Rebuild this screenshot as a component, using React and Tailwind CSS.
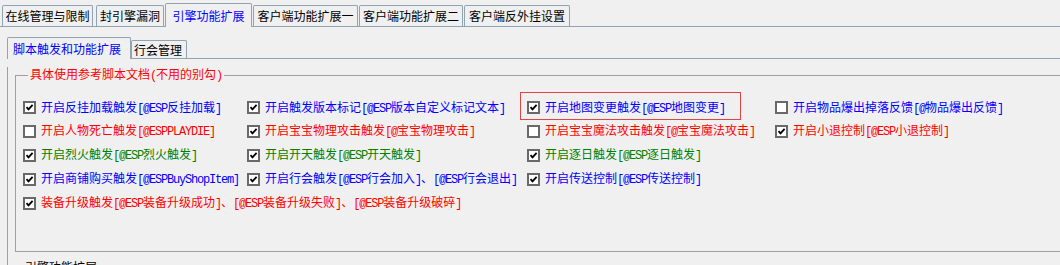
import React from "react";

const topTabs = [
  { label: "在线管理与限制", cls: "ml-[2px] w-[91px]" },
  { label: "封引擎漏洞", cls: "ml-[3px] w-[68px]" },
  { label: "引擎功能扩展", cls: "ml-[1px] w-[87px]", active: true },
  { label: "客户端功能扩展一", cls: "ml-[1px] w-[105px]" },
  { label: "客户端功能扩展二", cls: "ml-[1px] w-[104px]" },
  { label: "客户端反外挂设置", cls: "ml-[1px] w-[106px]" },
];

const BLUE = "text-[#0000ff]";
const RED = "text-[#ff0000]";
const GREEN = "text-[#008000]";

const rows = [
  {
    h: "h-[23px]",
    items: [
      { text: "开启反挂加载触发[@ESP反挂加载]", color: BLUE, checked: true },
      { text: "开启触发版本标记[@ESP版本自定义标记文本]", color: BLUE, checked: true },
      { text: "开启地图变更触发[@ESP地图变更]", color: BLUE, checked: true, marked: true },
      { text: "开启物品爆出掉落反馈[@物品爆出反馈]", color: BLUE, checked: false },
    ],
  },
  {
    h: "h-[24px]",
    items: [
      { text: "开启人物死亡触发[@ESPPLAYDIE]", color: RED, checked: false },
      { text: "开启宝宝物理攻击触发[@宝宝物理攻击]", color: RED, checked: true },
      { text: "开启宝宝魔法攻击触发[@宝宝魔法攻击]", color: RED, checked: false },
      { text: "开启小退控制[@ESP小退控制]", color: RED, checked: true },
    ],
  },
  {
    h: "h-[24px]",
    items: [
      { text: "开启烈火触发[@ESP烈火触发]", color: GREEN, checked: true },
      { text: "开启开天触发[@ESP开天触发]", color: GREEN, checked: true },
      { text: "开启逐日触发[@ESP逐日触发]", color: GREEN, checked: true },
    ],
  },
  {
    h: "h-[24px]",
    items: [
      { text: "开启商铺购买触发[@ESPBuyShopItem]", color: BLUE, checked: true },
      { text: "开启行会触发[@ESP行会加入]、[@ESP行会退出]", color: BLUE, checked: true },
      { text: "开启传送控制[@ESP传送控制]", color: BLUE, checked: true },
    ],
  },
];

// half-width runs get a 6px monospace advance, like the bitmap SimSun in the original
const Mixed = ({ text }) =>
  text.split(/([\x20-\x7e]+)/).map((part, i) =>
    /^[\x20-\x7e]+$/.test(part) ? (
      <span key={i} className="font-['Liberation_Mono',monospace] text-[12px] tracking-[-1.2px]">
        {part}
      </span>
    ) : (
      part
    )
  );

const Checkbox = ({ checked }) => (
  <span className="flex h-[13px] w-[13px] shrink-0 items-center justify-center border-2 border-[#696969] bg-white">
    {checked && (
      <svg width="9" height="9" viewBox="0 0 9 9">
        <path d="M1.5 4.2 L3.5 6.4 L7.6 1.8" fill="none" stroke="#000" strokeWidth="1.8" />
      </svg>
    )}
  </span>
);

const Option = ({ text, color, checked, marked }) => (
  <div className="relative flex h-full items-center gap-[5px]">
    {marked && (
      <span className="pointer-events-none absolute -left-[7px] -top-[4px] h-[28px] w-[221px] border border-[#e04545]" />
    )}
    <Checkbox checked={checked} />
    <span className={`whitespace-nowrap leading-[14px] ${color}`}>
      <Mixed text={text} />
    </span>
  </div>
);

export default function App() {
  return (
    <div className="h-[265px] w-[1060px] overflow-hidden bg-[#f0f0f0] pt-[3px] font-['Noto_Sans_CJK_SC',sans-serif] text-[12px] text-black">
      {/* top tab strip */}
      <div className="flex h-[24px] w-[1100px] items-end border-b border-[#8fa3b3]">
        {topTabs.map((t) =>
          t.active ? (
            <div
              key={t.label}
              className={`${t.cls} -mb-px flex h-[24px] items-center justify-center rounded-t-[2px] border border-b-0 border-[#8fa3b3] bg-[#f0f0f0] text-[#0000ff]`}
            >
              {t.label}
            </div>
          ) : (
            <div
              key={t.label}
              className={`${t.cls} flex h-[21px] items-center justify-center rounded-t-[2px] border border-b-0 border-[#8fa3b3] bg-[#f0f0f0]`}
            >
              {t.label}
            </div>
          )
        )}
      </div>

      {/* inner tab strip */}
      <div className="ml-[7px] mt-[10px] flex h-[22px] w-[1100px] items-end border-b border-[#8fa3b3]">
        <div className="-mb-px flex h-[22px] w-[124px] items-center rounded-t-[2px] border border-b-0 border-[#8fa3b3] bg-[#f0f0f0] pl-[5px] text-[#0000ff]">
          脚本触发和功能扩展
        </div>
        <div className="flex h-[18px] w-[56px] items-center rounded-t-[2px] border border-b-0 border-[#8fa3b3] bg-[#f0f0f0] pl-[2px]">
          行会管理
        </div>
      </div>

      {/* inner panel */}
      <div className="ml-[7px] w-[1100px] border-l border-[#8fa3b3] pb-[20px]">
        <fieldset className="ml-[7px] mt-[8px] border border-[#a0a0a0] pb-[36px] pl-[7px] pt-[13px]">
          <legend className="ml-[5px] px-[2px] leading-[14px] text-[#ff0000]">
            <Mixed text="具体使用参考脚本文档(不用的别勾)" />
          </legend>
          {rows.map((r, i) => (
            <div key={i} className={`grid ${r.h} grid-cols-[224px_280px_248px_1fr]`}>
              {r.items.map((it) => (
                <Option key={it.text} {...it} />
              ))}
            </div>
          ))}
          <div className="h-[24px]">
            <Option
              text="装备升级触发[@ESP装备升级成功]、[@ESP装备升级失败]、[@ESP装备升级破碎]"
              color={RED}
              checked
            />
          </div>
        </fieldset>
        <div className="ml-[17px] mt-[8px] leading-[14px]">引擎功能扩展</div>
      </div>
    </div>
  );
}
